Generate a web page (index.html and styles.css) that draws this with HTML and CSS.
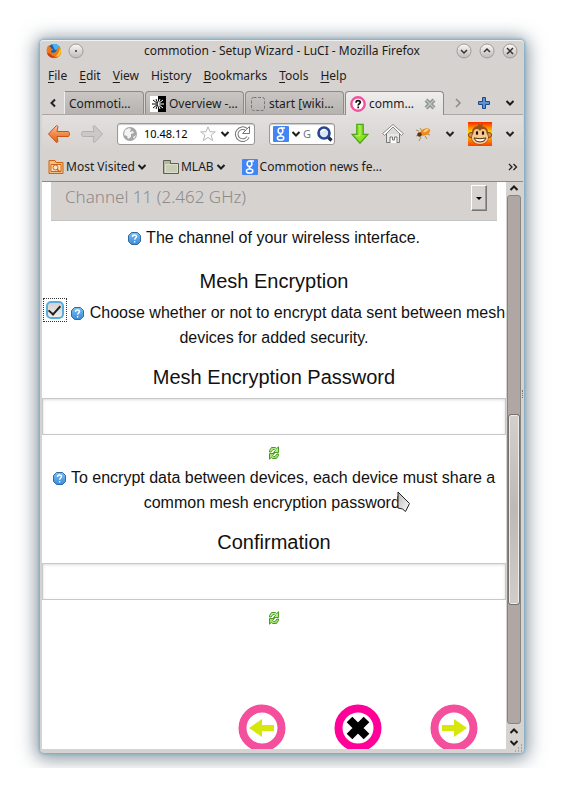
FILE: index.html
```html
<!DOCTYPE html>
<html lang="en">
<head>
<meta charset="utf-8">
<title>commotion - Setup Wizard - LuCI</title>
<link rel="stylesheet" href="styles.css">
</head>
<body>
<svg width="0" height="0" class="defs" aria-hidden="true">
  <defs>
    <linearGradient id="knob" x1="0" y1="0" x2="0" y2="1"><stop offset="0" stop-color="#fafafa"/><stop offset="1" stop-color="#bdb9b6"/></linearGradient>
    <linearGradient id="orange" x1="0" y1="0" x2="0" y2="1"><stop offset="0" stop-color="#f9c7a4"/><stop offset=".5" stop-color="#f08a4a"/><stop offset="1" stop-color="#e0601c"/></linearGradient>
    <linearGradient id="blue" x1="0" y1="0" x2="0" y2="1"><stop offset="0" stop-color="#7cc0f0"/><stop offset="1" stop-color="#3b8ad8"/></linearGradient>
    <linearGradient id="heat" x1="0" y1="0" x2="0" y2="1"><stop offset="0" stop-color="#ff2a00"/><stop offset=".45" stop-color="#ffe400"/><stop offset="1" stop-color="#ff3c00"/></linearGradient>
    <linearGradient id="pointer" x1="0" y1="0" x2="1" y2="1"><stop offset="0" stop-color="#b8b8b8"/><stop offset="1" stop-color="#fff"/></linearGradient>
  </defs>
  <symbol id="chevron" viewBox="0 0 10 10"><path d="M1.500 3l3.500 3.500L8.500 3" fill="none" stroke="currentColor" stroke-width="2"/></symbol>
  <symbol id="help" viewBox="0 0 14 14"><path d="M3.500.5h6l3 3v6l-3 3h-6l-3-3v-6z" fill="url(#blue)" stroke="#2d6cab"/><path d="M4.500 5c0-2.800 4-2.500 4-.4C8.500 6 6.600 6 6.600 7.800M6.600 9v1.500" fill="none" stroke="#fff" stroke-width="1.400"/></symbol>
  <symbol id="refresh" viewBox="0 0 12 14"><path d="M1.500 6V4.500l2-3h4l1.200 1L10.500.8v5.700H5.500l1.800-2-1-1H5L3 6z" fill="#b7e88a" stroke="#4a9a26"/><path d="M10.500 8v1.500l-2 3h-4l-1.200-1-1.800 1.700V7.500h5l-1.800 2 1 1H7L9 8z" fill="#a5df72" stroke="#4a9a26"/></symbol>
  <symbol id="google" viewBox="0 0 16 16"><rect width="16" height="16" rx="1" fill="#4285f4"/><ellipse cx="7.500" cy="4.700" rx="2.400" ry="2.700" fill="none" stroke="#fff" stroke-width="1.500"/><path d="M8 2h4M9 7.300c-2 .8-2.600 1.700-.5 2.500" fill="none" stroke="#fff" stroke-width="1.300"/><ellipse cx="7.600" cy="12" rx="3.200" ry="2.100" fill="none" stroke="#fff" stroke-width="1.500"/></symbol>
</svg>
<div class="desktop">
<div class="window">
  <header class="titlebar">
    <svg class="i16" viewBox="0 0 16 16"><circle cx="8" cy="8" r="7" fill="#1c5faa"/><path d="M6 1.500C10 0 14 3 14 6L9 7z" fill="#4bb3ec"/><path d="M2.500 2c0 1 1 2 2.500 2-1 1 0 2 2 2 0 1.500-1.800 1.200-2.200 2.500.7 2 3.700 1.500 5 .3 1.200-1.300 1.800-3.200 1.200-4.800C14 5 16 8 14.800 11 12 17 3 16.500 1 10.500 0 7 1 4 2.500 2z" fill="#ee7a16"/><path d="M14 4c1.500 3 1.200 7-1 9-2.500 2-5 2-7 1 5 0 7.500-4 8-10z" fill="#ffc928"/><path d="M1 10c2 5 8 6 11 3.500-3 .5-7-.5-8-3z" fill="#cf3518"/></svg>
    <button class="knob" aria-label="Sticky"><svg class="i16" viewBox="0 0 16 16"><circle cx="8" cy="8" r="7" fill="url(#knob)" stroke="#a09c98"/><circle cx="8" cy="8" r="1" fill="#333"/></svg></button>
    <h1 class="title">commotion - Setup Wizard - LuCI - Mozilla Firefox</h1>
    <div class="controls">
      <button class="knob" aria-label="Minimize"><svg class="i16" viewBox="0 0 16 16"><circle cx="8" cy="8" r="7" fill="url(#knob)" stroke="#a09c98"/><path d="M5 7l3 3 3-3" fill="none" stroke="#333" stroke-width="1.500"/></svg></button>
      <button class="knob" aria-label="Maximize"><svg class="i16" viewBox="0 0 16 16"><circle cx="8" cy="8" r="7" fill="url(#knob)" stroke="#a09c98"/><path d="M5 9l3-3 3 3" fill="none" stroke="#333" stroke-width="1.500"/></svg></button>
      <button class="knob" aria-label="Close"><svg class="i16" viewBox="0 0 16 16"><circle cx="8" cy="8" r="7" fill="url(#knob)" stroke="#a09c98"/><path d="M5 5l6 6M11 5l-6 6" fill="none" stroke="#333" stroke-width="1.500"/></svg></button>
    </div>
  </header>
  <nav class="menu">
    <a href="#"><u>F</u>ile</a><a href="#"><u>E</u>dit</a><a href="#"><u>V</u>iew</a><a href="#">Hi<u>s</u>tory</a><a href="#"><u>B</u>ookmarks</a><a href="#"><u>T</u>ools</a><a href="#"><u>H</u>elp</a>
  </nav>
  <div class="tabs">
    <button class="tool scroll-left" aria-label="Scroll tabs left"><svg class="i10" viewBox="0 0 10 10"><path d="M7 1.500L3.500 5 7 8.500" fill="none" stroke="#222" stroke-width="2"/></svg></button>
    <button class="tab first">Commoti…</button>
    <button class="tab"><svg class="i16" viewBox="0 0 16 16"><path d="M0 0h8v16H0z" fill="#fff"/><path d="M8 0h8v16H8z"/><path d="M8 8L3 4M8 8L3 12M8 8H2M8 8L6 3M8 8l-2 5" stroke="#000"/><path d="M8 8l5-4M8 8l5 4M8 8h6M8 8l2-5M8 8l2 5" stroke="#fff"/></svg><span>Overview -…</span></button>
    <button class="tab"><svg class="i16" viewBox="0 0 16 16"><rect x="1.500" y="1.500" width="13" height="13" rx="2" fill="none" stroke="#777" stroke-dasharray="3 1.500"/></svg><span>start [wiki…</span></button>
    <button class="tab active"><svg class="i16" viewBox="0 0 16 16"><circle cx="8" cy="8" r="6.700" fill="#fff" stroke="#f4509c" stroke-width="2.400"/><path d="M6 6.800c0-3.200 4.300-2.700 4.300-.5C10.300 7.700 8.200 7.800 8.200 9.500M8.200 10.600v1.600" fill="none" stroke="#111" stroke-width="1.700"/></svg><span>comm…</span><svg class="i12" viewBox="0 0 12 12"><path d="M2 2l8 8M10 2l-8 8" stroke="#8b938d" stroke-width="4"/><path d="M2 2l8 8M10 2l-8 8" stroke="#bfc4bf" stroke-width="1.500"/></svg></button>
    <button class="tool" aria-label="Scroll tabs right"><svg class="i10" viewBox="0 0 10 10"><path d="M3 1l4 4-4 4" fill="none" stroke="#8c8986" stroke-width="1.500"/></svg></button>
    <button class="tool" aria-label="New tab"><svg class="i12" viewBox="0 0 12 12"><path d="M4.500.5h3v4h4v3h-4v4h-3v-4h-4v-3h4z" fill="#5b92d2" stroke="#204a87"/></svg></button>
    <button class="tool" aria-label="List all tabs"><svg class="i10"><use href="#chevron"/></svg></button>
  </div>
  <div class="nav">
    <button class="tool" aria-label="Back"><svg class="i24" viewBox="0 0 24 20"><path d="M1.500 10l8-8.500 1.500 1-1 5h11.500c1.200.8 1.200 4.200 0 5H10l1 5-1.500 1z" fill="url(#orange)" stroke="#c9531a"/></svg></button>
    <button class="tool" aria-label="Forward"><svg class="i24" viewBox="0 0 24 20"><path d="M22.500 10l-8-8.500-1.500 1 1 5H2.500c-1.200.8-1.200 4.200 0 5H14l-1 5 1.500 1z" fill="#cbc8c6" stroke="#b3b0ad"/></svg></button>
    <div class="field address">
      <svg class="i16" viewBox="0 0 16 16"><circle cx="8" cy="8" r="7" fill="#a5a5a5"/><path d="M3 4l4-2 2 1-1 3 3-1 1 2-3 1v3l-3 2-1-3-3-1zM11 11l3-2-2 4z" fill="#f3f3f3"/></svg>
      <input type="text" value="10.48.12" aria-label="Address">
      <svg class="i16" viewBox="0 0 16 16"><path d="M8 .8l2 5h5.300l-4.200 3.400 1.600 5.400L8 11.500l-4.700 3.100 1.600-5.400L.7 5.800H6z" fill="#fff" stroke="#b5b5b5"/></svg>
      <svg class="i10"><use href="#chevron"/></svg>
      <svg class="i16" viewBox="0 0 16 16"><path d="M12.500 3.500A6 6 0 1 0 14 11" fill="none" stroke="#777" stroke-width="3.600"/><path d="M12.500 3.500A6 6 0 1 0 14 11" fill="none" stroke="#fff" stroke-width="1.600"/><path d="M15.500.5v7h-7l2.500-2.500 1.500-1.500z" fill="#fff" stroke="#777"/></svg>
    </div>
    <div class="field search">
      <svg class="i16"><use href="#google"/></svg>
      <svg class="i10"><use href="#chevron"/></svg>
      <input type="text" placeholder="G" aria-label="Search">
      <svg class="i16" viewBox="0 0 16 16"><path d="M11 11l3.500 3.500" stroke="#222c4a" stroke-width="3.200"/><circle cx="7" cy="7" r="5.500" fill="#d9e6f8" stroke="#29458f" stroke-width="2.600"/><path d="M4 6a3 3 0 0 1 4-2" fill="none" stroke="#fff" stroke-width="1.500"/></svg>
    </div>
    <button class="tool" aria-label="Downloads"><svg class="i22" viewBox="0 0 22 24"><path d="M7.500 1.500h7v11h5L11 22 2.500 12.500h5z" fill="#8be322" stroke="#4da51c" stroke-width="1.400"/><path d="M9 3h2v11H6" fill="none" stroke="#c3f588"/></svg></button>
    <button class="tool" aria-label="Home"><svg class="i22" viewBox="0 0 22 22"><path d="M4.500 11v8.500h13V11" fill="#e9e8e7" stroke="#777"/><path d="M8 20v-6h2.500v3h2v-3H15v6" fill="#fff" stroke="#777"/><path d="M11 4l8.500 8.500 1.800-2L11 1.500.7 10.500l1.800 2z" fill="#fff" stroke="#888"/></svg></button>
    <button class="tool small" aria-label="Firebug"><svg class="i16" viewBox="0 0 16 16"><path d="M4 5L1 4M4 9l-3 1M6 11l-2 4M10 10l2 3M12 8l3 1M7 5L5 2" stroke="#a28b63"/><ellipse cx="10" cy="6" rx="5.500" ry="3.300" transform="rotate(-25 10 6)" fill="#ef8a20"/><ellipse cx="11" cy="4.500" rx="2.800" ry="1.200" transform="rotate(-25 11 4.500)" fill="#ffd466"/><circle cx="4.500" cy="8.500" r="2.200" fill="#5a3312"/></svg></button>
    <button class="tool small" aria-label="Firebug menu"><svg class="i10"><use href="#chevron"/></svg></button>
    <button class="tool" aria-label="Greasemonkey"><svg class="i24" viewBox="0 0 24 24"><path d="M0 0h24v24H0z" fill="url(#heat)"/><circle cx="3" cy="13" r="2.500" fill="#d99a55" stroke="#7a3a10"/><circle cx="21" cy="13" r="2.500" fill="#d99a55" stroke="#7a3a10"/><path d="M4 11c0-5 3-7 6-7l0-3 2 2 3-2-1 3c4 1 6 3 6 7 2 5 0 11.500-8 11.500S2 17 4 11z" fill="#9a5018"/><path d="M5.500 11c0-5 5-5 6.500-2 1.500-3 6.500-3 6.500 2 3.500 5 1 11-6.500 11S2 16 5.500 11z" fill="#f2cb90"/><ellipse cx="9" cy="11" rx="1.200" ry="2" fill="#2a1206"/><ellipse cx="15" cy="11" rx="1.200" ry="2" fill="#2a1206"/><path d="M6 16q6 1.500 12 0-1 4-6 4t-6-4z" fill="#fff" stroke="#5b260a"/></svg></button>
    <button class="tool small" aria-label="Greasemonkey menu"><svg class="i10"><use href="#chevron"/></svg></button>
  </div>
  <div class="bookmarks">
    <a href="#"><svg class="i16" viewBox="0 0 16 16"><path d="M1 1.500h6l1 2h7v11H1z" fill="#f6bd82" stroke="#cf6312"/><path d="M3 5.500h10v7H3z" fill="#ffe3c0" stroke="#cf6312"/><circle cx="7.500" cy="8.500" r="2.500" fill="none" stroke="#cf6312"/><path d="M9 10l3 3" stroke="#cf6312" stroke-width="1.500"/></svg><span>Most Visited</span><svg class="i10"><use href="#chevron"/></svg></a>
    <a href="#"><svg class="i16" viewBox="0 0 16 16"><path d="M.5 1.500h7v3h8v10H.5z" fill="#b5b89e" stroke="#5d6150"/><path d="M2.500 5.500h12v8h-12z" fill="#c9ccb6" stroke="#dcdfcd"/></svg><span>MLAB</span><svg class="i10"><use href="#chevron"/></svg></a>
    <a href="#"><svg class="i16"><use href="#google"/></svg><span>Commotion news fe…</span></a>
    <button class="tool more" aria-label="More bookmarks"><svg class="i10" viewBox="0 0 10 10"><path d="M1 2l3 3-3 3M5.500 2l3 3-3 3" fill="none" stroke="#222" stroke-width="1.300"/></svg></button>
  </div>
  <div class="viewport">
    <main class="page">
      <div class="select-wrap">
        <select aria-label="Channel"><option>Channel 11 (2.462 GHz)</option></select>
        <span class="select-arrow"></span>
      </div>
      <p class="hint spaced"><svg class="help"><use href="#help"/></svg> The channel of your wireless interface.</p>
      <h2 class="after-channel"><label for="enc">Mesh Encryption</label></h2>
      <p class="hint spaced"><span class="check"><input type="checkbox" id="enc" checked></span> <svg class="help"><use href="#help"/></svg> Choose whether or not to encrypt data sent between mesh<br>devices for added security.</p>
      <h2><label for="pw">Mesh Encryption Password</label></h2>
      <input class="password" type="password" id="pw">
      <button class="refresh" aria-label="Show password"><svg><use href="#refresh"/></svg></button>
      <p class="hint"><svg class="help"><use href="#help"/></svg> To encrypt data between devices, each device must share a<br><span class="pointed">common mesh encryption password.<svg class="pointer" viewBox="0 0 15 23"><path d="M1 1l11.500 11.500-4 8-3-2.500L1 17z" fill="url(#pointer)" stroke="#222"/></svg></span></p>
      <h2><label for="confirm">Confirmation</label></h2>
      <input class="password" type="password" id="confirm">
      <button class="refresh" aria-label="Show confirmation"><svg><use href="#refresh"/></svg></button>
      <div class="steps">
        <button aria-label="Previous"><svg viewBox="0 0 48 48"><circle cx="24" cy="24" r="19.500" fill="#fff" stroke="#f44f9c" stroke-width="8"/><path d="M11 24l13-9v6h12v6H24v6z" fill="#d7e70b"/></svg></button>
        <button aria-label="Cancel"><svg viewBox="0 0 48 48"><circle cx="24" cy="24" r="19.500" fill="#fff" stroke="#ff0098" stroke-width="8"/><path d="M15.500 15.500l17 17M32.500 15.500l-17 17" stroke="#000" stroke-width="8"/></svg></button>
        <button aria-label="Next"><svg viewBox="0 0 48 48"><circle cx="24" cy="24" r="19.500" fill="#fff" stroke="#f44f9c" stroke-width="8"/><path d="M37 24l-13-9v6H12v6h12v6z" fill="#d7e70b"/></svg></button>
      </div>
    </main>
    <div class="scrollbar">
      <svg class="i10 up"><use href="#chevron"/></svg>
      <div class="track"><div class="thumb"></div></div>
      <svg class="i10 up"><use href="#chevron"/></svg>
      <svg class="i10"><use href="#chevron"/></svg>
    </div>
    <div class="splitter"><i></i></div>
  </div>
  <svg class="grip" viewBox="0 0 8 8"><path d="M6 1h1M6 4h1M3 4h1M6 7h1M3 7h1M0 7h1" stroke="#777"/></svg>
</div>
</div>
</body>
</html>
```
FILE: styles.css
```css
* { box-sizing: border-box; }

body { margin: 0; background: #fff; }

button { padding: 0; border: 0; background: none; font: inherit; color: inherit; }
input, select { font: inherit; }
a { color: inherit; text-decoration: none; }
svg { display: block; flex: none; }

.defs { position: absolute; }
.i10 { width: 10px; height: 10px; }
.i12 { width: 12px; height: 12px; }
.i16 { width: 16px; height: 16px; }
.i22 { width: 22px; height: 22px; }
.i24 { width: 24px; height: 24px; }

.desktop {
  display: flex;
  height: calc(100vh - 25px);
  padding: 40px 40px 15px;
  overflow: hidden;
}

.window {
  position: relative;
  display: flex;
  flex: 1;
  flex-direction: column;
  min-width: 0;
  padding: 1px 1px 4px 2px;
  border-radius: 4px;
  background: #d6d2d0;
  box-shadow: inset 0 1px #f1f0ef, 0 0 3px 1px #74adc9, 0 2px 18px 4px rgba(90, 105, 120, .7);
  color: #1c1c1c;
  font: 12px/16px "Noto Sans", "Open Sans", sans-serif;
  white-space: nowrap;
}

.titlebar { display: flex; align-items: center; gap: 6px; height: 20px; padding: 0 5px 0 4px; }
.title { flex: 1; margin: 0; padding-left: 24px; font: inherit; text-align: center; }
.controls { display: flex; gap: 7px; }

.menu { display: flex; align-items: center; gap: 12px; height: 30px; padding-left: 6px; }
.menu u { text-underline-offset: 2px; }

.tabs { display: flex; align-items: center; height: 24px; border-bottom: 1px solid #aaa7a5; }
.tool { display: flex; flex: 1; align-items: center; justify-content: center; }
.scroll-left { flex: 0 0 22px; }
.tab {
  display: flex;
  flex: 0 0 99px;
  align-items: center;
  gap: 3px;
  height: 23px;
  margin-right: 1px;
  padding: 2px 4px 0;
  overflow: hidden;
  border: 1px solid #8d8a88;
  border-bottom: 0;
  border-radius: 4px 4px 0 0;
  background: linear-gradient(#c9c6c4, #b5b2b0);
}
.tab.first { flex-basis: 80px; border-left-color: #eee; border-top-left-radius: 0; }
.tab.active { height: 24px; background: linear-gradient(#efeeed, #e2dfde); }
.tab.active .i12 { margin-left: auto; margin-right: 3px; }

.nav {
  display: flex;
  align-items: center;
  height: 37px;
  background: linear-gradient(#e2dfde, #d6d2d0);
}
.nav .tool { flex: 0 1 34px; color: #222; }
.nav .small { flex-basis: 27px; }
.field {
  display: flex;
  align-items: center;
  gap: 4px;
  height: 22px;
  padding: 0 4px;
  border: 1px solid #9a9795;
  border-radius: 3px;
  background: #fff;
  box-shadow: inset 0 1px 1px #ccc;
  font-size: 11px;
}
.field input { flex: 1; width: 0; min-width: 0; padding: 0; border: 0; outline: 0; background: none; }
.address { flex: 0 0 138px; margin-left: 8px; }
.address input { margin-left: 2px; }
.search { flex: 0 0 66px; gap: 2px; margin: 0 8px 0 14px; padding: 0 1px 0 3px; }

.bookmarks { display: flex; align-items: center; gap: 16px; height: 30px; padding-left: 6px; border-bottom: 1px solid #8b8987; }
.bookmarks a { display: flex; align-items: center; gap: 2px; }
.bookmarks .more { flex: 0 0 20px; margin-left: auto; }

.viewport { display: flex; flex: 1; min-height: 0; }
.page {
  flex: 1;
  min-width: 0;
  overflow: hidden;
  background: #fff;
  color: #111;
  font: 16px/25px "Liberation Sans", Arial, sans-serif;
  text-align: center;
}

.select-wrap { position: relative; margin: 0 9px; }
.select-wrap select {
  display: block;
  width: 100%;
  height: 39px;
  padding: 0 14px 10px;
  border: 0;
  border-bottom: 1px solid #c4c4c4;
  border-radius: 0;
  appearance: none;
  background: #d6d2d0;
  color: #8d8b89;
  font: 17px/25px "Noto Sans", "Open Sans", sans-serif;
  font-weight: 300;
}
.select-arrow {
  position: absolute;
  top: 3px;
  right: 10px;
  display: grid;
  place-items: center;
  width: 16px;
  height: 26px;
  border: 1px solid;
  border-color: #fff #777 #777 #fff;
  box-shadow: inset -1px -1px #999;
  pointer-events: none;
}
.select-arrow::after { content: ""; border: 3px solid transparent; border-top-color: #000; border-bottom: 0; }

.hint { margin: 0; }
.spaced { margin-top: 4px; }
.help { display: inline-block; width: 14px; height: 14px; vertical-align: -3px; }
.page h2 { margin: 12px 0 0; font: 20px/30px "Liberation Sans", Arial, sans-serif; }
.page .after-channel { margin-top: 16px; }

.check {
  display: inline-grid;
  place-items: center;
  width: 24px;
  height: 24px;
  margin: -4px 0;
  border: 1px dotted #333;
  vertical-align: -1px;
}
.check input {
  width: 18px;
  height: 18px;
  margin: 0;
  border: 2px solid #58aedb;
  border-radius: 5px;
  appearance: none;
  background: linear-gradient(#d5d3d2, #f0efee);
}
.check input:checked::after {
  content: "";
  display: block;
  width: 5px;
  height: 10px;
  margin: 0 auto;
  border: solid #222;
  border-width: 0 2px 2px 0;
  transform: rotate(42deg);
}

.password {
  display: block;
  width: 100%;
  height: 37px;
  margin-top: 6px;
  padding: 0 10px;
  border: 1px solid #c8c8c8;
  outline: 0;
  background: #fff;
  box-shadow: inset 0 1px 3px #ddd;
}
.refresh { display: block; height: 25px; margin: 5px auto 0; }
.refresh svg { width: 12px; height: 14px; }

.pointed { position: relative; }
.pointer { position: absolute; right: -8px; bottom: -3px; width: 15px; height: 23px; }

.steps { display: flex; justify-content: flex-end; gap: 48px; margin-top: 74px; padding-right: 28px; }
.steps svg { width: 48px; height: 48px; }

.scrollbar { display: flex; flex: 0 0 15px; flex-direction: column; align-items: center; gap: 2px; padding: 1px 0; }
.up { transform: rotate(180deg); }
.track {
  flex: 1;
  width: 14px;
  padding: 0 1px;
  border: 1px solid #898381;
  border-radius: 3px;
  background: #aea7a4;
}
.thumb {
  position: relative;
  top: 41.5%;
  height: 36%;
  border: 1px solid #eeedec;
  border-radius: 2px;
  outline: 1px solid #77716e;
  background: linear-gradient(#d2cfcd, #bdb9b6 50%, #cfccca);
}
.splitter { display: flex; flex: 0 0 2px; align-items: center; }
.splitter i { width: 2px; height: 8px; margin-bottom: 144px; border-right: 1px dotted #777; }
.grip { position: absolute; right: 1px; bottom: 1px; width: 8px; height: 8px; }
```
